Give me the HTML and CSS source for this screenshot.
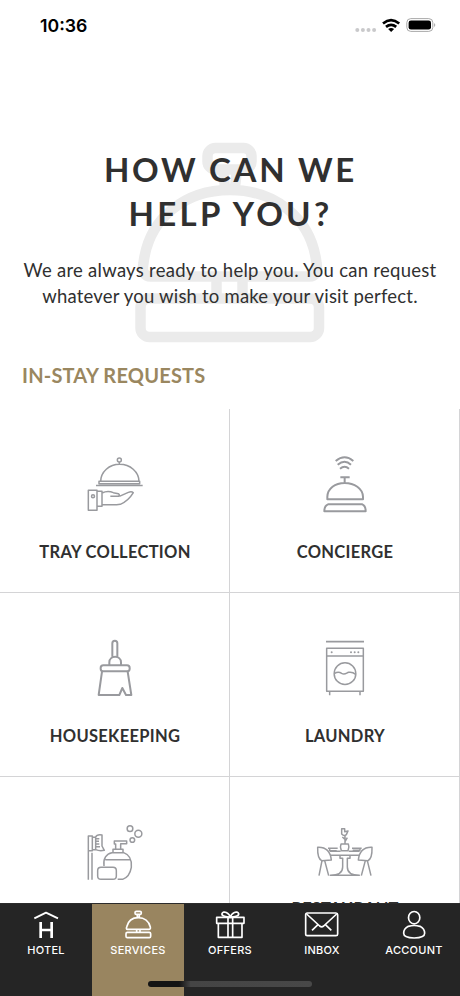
FILE: index.html
```html
<!DOCTYPE html>
<html lang="en">
<head>
<meta charset="utf-8">
<title>Hotel services</title>
<link rel="stylesheet" href="styles.css">
</head>
<body>
<div class="screen">
  <header class="status">
    <span class="time">10:36</span>
    <svg class="status-icons" viewBox="0 0 84 20" width="84" height="20">
      <g fill="#c9c9cb"><circle cx="5.300" cy="14" r="2"/><circle cx="10.900" cy="14" r="2"/><circle cx="16.500" cy="14" r="2"/><circle cx="22.100" cy="14" r="2"/></g>
      <g fill="none" stroke="#000" stroke-width="2.700"><path d="M31 7.500q8-6.600 16.200 0"/><path d="M34 10.900q5.100-4.200 10.200 0"/></g>
      <path d="M36.100 13q3-2.200 6 0L39.100 16z"/>
      <rect x="54.800" y="2.600" width="26" height="12.800" rx="4" fill="none" stroke="#a9a9a9"/>
      <rect x="56.600" y="4.400" width="22.400" height="9.200" rx="2.400"/>
      <path d="M82.100 7q2.400 2 0 4.200z" fill="#a9a9a9"/>
    </svg>
  </header>
  <main class="content">
    <section class="hero">
      <svg class="hero-bell" viewBox="0 0 220 220" width="220" height="220" fill="none" stroke="#ebebeb" stroke-width="10.500">
        <rect x="87.500" y="18" width="44" height="21.500" rx="8"/>
        <path d="M103 40l2 17M117 40l-2 17"/>
        <path d="M31 146.500Q21 146.500 23.500 133C29 87 66 60 110 60S191 87 196.500 133Q199 146.500 189 146.500Z"/>
        <path d="M96.500 148v18M122.500 148v18"/>
        <rect x="20.500" y="168.500" width="178.500" height="38.500" rx="9"/>
      </svg>
      <h1><span class="l1">HOW CAN WE</span><br><span class="l2">HELP YOU?</span></h1>
      <p><span class="p1">We are always ready to help you. You can request</span><br><span class="p2">whatever you wish to make your visit perfect.</span></p>
    </section>
    <h2>IN-STAY REQUESTS</h2>
    <section class="grid">
      <article class="cell">
        <svg class="icon" viewBox="0 0 270 240">
          <circle cx="148" cy="45" r="6"/><path d="M148 51v7M92 110C92 80 118 58 149 58S207 80 207 110M87 109H209V116H87ZM78 121.500H218"/>
          <rect x="55" y="136" width="26" height="60"/><circle cx="69" cy="154" r="4.500"/>
          <path d="M81 139H96V184H81M96 144C108 138 119 138 130 143L145 146Q151 150 145 154H121M148 154L175 142Q185 138 190 143C181 158 168 171 151 178C132 181 116 179 97 179"/>
        </svg>
        <h3>TRAY COLLECTION</h3>
      </article>
      <article class="cell">
        <svg class="icon bold" viewBox="0 0 270 240">
          <path d="M107 48Q134 26 160 48M113 59Q134 42 153 59M120 71Q134 60 147 71M121 97H149M134 97V113M82 163V155C83 130 105 114 134 114S188 130 189 155V163ZM84 178H187Q197 182 197 199H73Q73 182 84 178Z"/>
        </svg>
        <h3>CONCIERGE</h3>
      </article>
      <article class="cell">
        <svg class="icon bold" viewBox="0 -3 270 240">
          <path d="M127 80V40Q127 32 134.500 32T142 40V80M118 105V97C118 75 153 75 153 97V105"/>
          <rect x="92" y="106" width="87" height="18" rx="8"/>
          <path d="M96 125L86 195H148L157 174L168 195H184L173 125"/>
        </svg>
        <h3>HOUSEKEEPING</h3>
      </article>
      <article class="cell">
        <svg class="icon" viewBox="0 -3 270 240">
          <path d="M78 35H192" stroke-width="5"/><rect x="80" y="55" width="110" height="129"/><path d="M80 78H190M89 185V196M180 185V196"/>
          <circle cx="135" cy="131" r="32.500"/><path d="M104 130Q115 123 125 130C134 136 139 129 146 127Q158 125 166 133"/>
          <g class="dots"><circle cx="95" cy="67" r="3"/><circle cx="153" cy="67" r="3"/><circle cx="164" cy="67" r="3"/><circle cx="175" cy="67" r="3"/></g>
        </svg>
        <h3>LAUNDRY</h3>
      </article>
      <article class="cell">
        <svg class="icon" viewBox="0 -6 270 240">
          <path d="M55 194V63H67V107H57M66 113V194M67 67H76Q81 57 96 60V93L103 106C93 108 84 107 77 104H67M77 67V104M78 71H88M78 79H87M78 87H88M78 95H90"/>
          <path d="M129 113V103H159V113M137 102V87H133V78H170V86H152V102M102 153C99 131 109 116 126 113H161C178 119 186 135 184 157C181 174 172 188 158 193H143M106 134H181"/>
          <rect x="83" y="157" width="56" height="36" rx="10"/>
          <circle cx="180" cy="41" r="8.500"/><circle cx="205" cy="56" r="10.500"/><circle cx="187" cy="75" r="7"/>
        </svg>
      </article>
      <article class="cell">
        <svg class="icon" viewBox="90 -6 270 240">
          <path d="M215 41V57Q222 65 229 59L234 48L224 50V41ZM225 61V85M225 73L217 66M225 80L232 68M213 87H235Q239 96 234 107H214Q209 96 213 87Z"/>
          <path d="M180 109H212M236 109H269M180 121H269M174 100H203M179 101V107H200M246 100H275M248 106H270V101"/>
          <path d="M143 97C166 96 181 108 184 135L155 137Q142 131 143 97ZM306 97C283 96 268 108 265 135L294 137Q307 131 306 97Z"/>
          <path d="M156 137L147 182M164 137L176 182M286 137L274 182M292 137L303 182M210 122V130H218V156Q218 181 181 181H268Q232 181 232 156V130H240V122"/>
        </svg>
        <h3 class="restaurant">RESTAURANT</h3>
      </article>
    </section>
  </main>
  <nav class="tabs">
    <a class="tab"><svg class="tab-icon" viewBox="92 27 92 92"><path d="M102 55L137 38L173 55" stroke-width="5.500"/><path d="M121 66V114M154 66V114M121 90H154" stroke-width="8"/></svg><span>HOTEL</span></a>
    <a class="tab active"><svg class="tab-icon" viewBox="369 27 92 92"><rect x="405" y="34" width="19" height="9" rx="4"/><path d="M412 43V53M418 43V53M382 88Q378 88 380 81C384 64 397 53 415 53S447 64 451 81Q452 88 448 88ZM410 88V97M420 88V97"/><rect x="378" y="97" width="74" height="16" rx="4"/></svg><span>SERVICES</span></a>
    <a class="tab"><svg class="tab-icon" viewBox="643 27 92 92"><rect x="648" y="52" width="82" height="18"/><path d="M653 70V112H724V70M682 52V112M696 52V112M689 52C676 50 662 49 664 41C668 31 686 38 689 52C692 38 710 31 714 41C716 49 702 50 689 52"/></svg><span>OFFERS</span></a>
    <a class="tab"><svg class="tab-icon wide" viewBox="218 27 112 92"><rect x="226" y="39" width="96" height="68" rx="5"/><path d="M229 42L268 78Q274 83 280 78L319 42M245 91L263 74M303 91L285 74"/></svg><span>INBOX</span></a>
    <a class="tab"><svg class="tab-icon" viewBox="504 27 92 92"><ellipse cx="549.500" cy="53" rx="17" ry="18.500"/><path d="M532 79C524 83 518 91 518 100Q518 114 549.500 114T581 100C581 91 575 83 567 79Q549 74 532 79Z"/></svg><span>ACCOUNT</span></a>
    <i class="home"></i>
  </nav>
</div>
</body>
</html>
```
FILE: styles.css
```css
* { box-sizing: border-box; }
body { margin: 0; background: #fff; }
.screen {
  width: 460px;
  height: 996px;
  display: flex;
  flex-direction: column;
  overflow: hidden;
  color: #303030;
  font-family: Lato, sans-serif;
}
.status {
  height: 52px;
  flex: none;
  display: flex;
  justify-content: space-between;
  align-items: flex-start;
  padding: 15px 24px 0 40px;
  color: #000;
}
.time { font: 600 17.7px/22px Inter, sans-serif; }
.status-icons { margin-top: 1px; }
.content { flex: 1; min-height: 0; overflow: hidden; }
.hero { position: relative; height: 310px; padding-top: 95px; text-align: center; }
.hero-bell { position: absolute; left: 120px; top: 78px; z-index: -1; }
h1, h2, h3, p { margin: 0; }
h1 { font-size: 33px; line-height: 44px; font-weight: 700; white-space: nowrap; }
h1 span, p span { display: inline-block; }
.l1 { letter-spacing: 2.75px; margin-right: -1px; }
.l2 { letter-spacing: 3.3px; margin-right: -1px; }
p { margin-top: 23px; font-size: 18.5px; line-height: 25.5px; white-space: nowrap; }
.p1 { letter-spacing: .27px; }
.p2 { letter-spacing: .2px; }
h2 { height: 47px; padding-left: 22px; font-size: 20px; line-height: 27px; font-weight: 700; letter-spacing: .2px; color: #9a8760; }
.grid { display: grid; grid-template-columns: 230px 230px; grid-auto-rows: 184px; }
.cell {
  display: flex;
  flex-direction: column;
  align-items: center;
  padding-top: 36px;
  box-shadow: inset -1px -1px #d4d4d6;
}
.icon { width: 90px; height: 80px; flex: none; fill: none; stroke: #999a9e; stroke-width: 4.5; stroke-linejoin: round; }
.icon.bold { stroke-width: 6; }
.icon .dots { fill: #999a9e; stroke: none; }
h3 { margin-top: 16px; font-size: 16.5px; line-height: 22px; font-weight: 700; letter-spacing: .3px; white-space: nowrap; }
.restaurant { margin-top: 5px; letter-spacing: .1px; }
.tabs {
  position: relative;
  height: 93px;
  flex: none;
  display: grid;
  grid-template-columns: repeat(5, 92px);
  background: #252525;
  border-top: 1px solid #2c2c2c;
}
.tab { display: flex; flex-direction: column; align-items: center; padding-top: 5px; color: #fff; font: 500 11px/14px Inter, sans-serif; }
.tab.active { background: #998560; }
.tab-icon { width: 30.67px; height: 30.67px; fill: none; stroke: #fff; stroke-width: 5; stroke-linejoin: round; margin-bottom: 3px; }
.tab-icon.wide { width: 37.33px; }
.tab span { letter-spacing: .25px; }
.home { position: absolute; left: 148px; top: 77px; width: 164px; height: 6px; border-radius: 3px; background: linear-gradient(90deg, #141414 0 19%, #454545 26%, #484848); }
```
